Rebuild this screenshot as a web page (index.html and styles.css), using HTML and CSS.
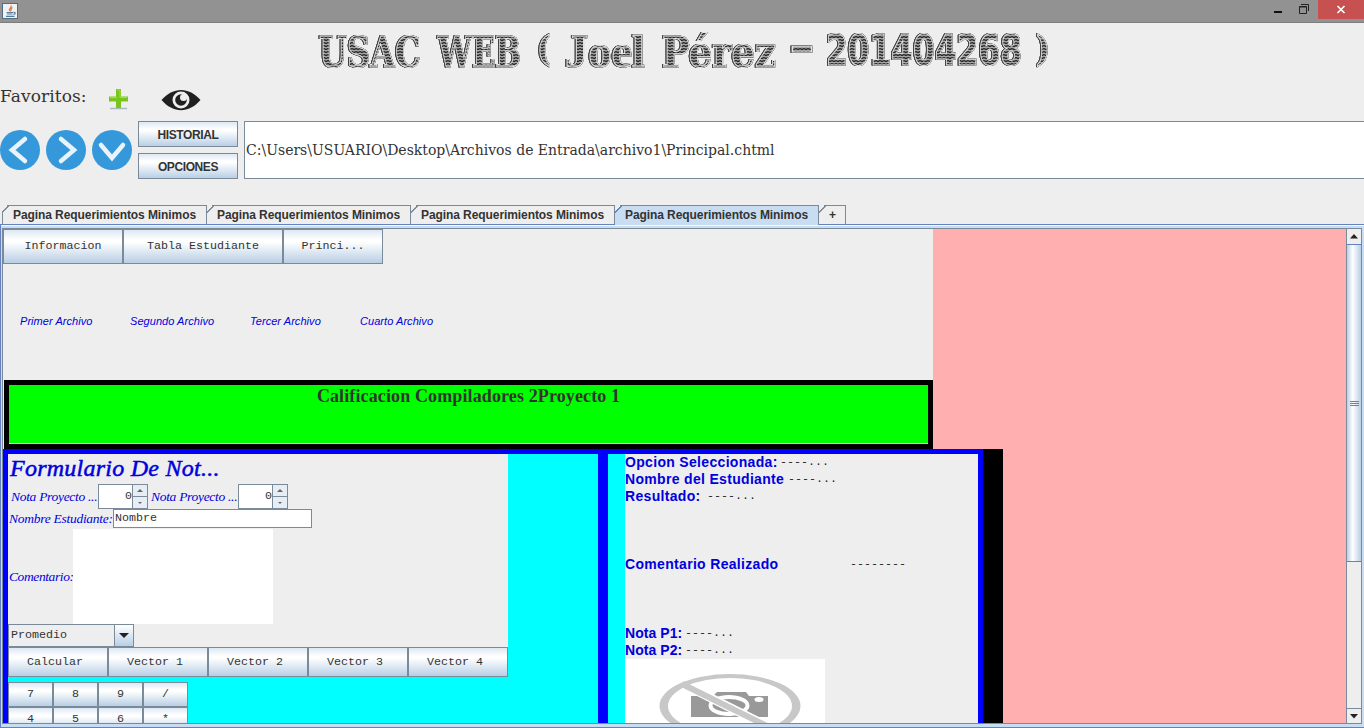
FILE: index.html
```html
<!DOCTYPE html>
<html lang="es">
<head>
<meta charset="utf-8">
<title>USAC WEB</title>
<link rel="stylesheet" href="styles.css">
</head>
<body>
<div class="window">
  <div class="titlebar">
    <svg class="java" width="17" height="17" viewBox="0 0 17 17"><rect x=".5" y=".5" width="15" height="15" fill="#eef1f5" stroke="#536d84"/><path d="M9 2.500C10 5 6.500 5.500 7.500 8M10.500 4.500C8 6 9.500 7 8.500 8.500" fill="none" stroke="#e37b38" stroke-width="1.300"/><path d="M4.500 9.500H11M5 11H10.500M4 13.300H12.500M11.500 9.300C14 9 13.500 11 11.500 11.300" fill="none" stroke="#54799b" stroke-width="1.200"/></svg>
    <div class="controls">
      <svg width="50" height="19" viewBox="0 0 50 19"><path d="M3 12H11" stroke="#111" stroke-width="2"/><path d="M28.500 6.500H35.500V13.500H28.500Z" fill="none" stroke="#222" stroke-width="1"/><path d="M28 7H36M30 4.500H37.500V11" fill="none" stroke="#222"/></svg>
      <div class="close"><svg width="10" height="9" viewBox="0 0 10 9"><path d="M1.500 1L8.500 8M8.500 1L1.500 8" stroke="#fff" stroke-width="1.700"/></svg></div>
    </div>
  </div>
  <div class="banner">
    <svg width="740" height="50" viewBox="312 23 740 50">
      <defs><pattern id="hatch" width="4" height="3" patternUnits="userSpaceOnUse"><rect width="4" height="3" fill="#aaa"/><path d="M0 .5L2 1.500L4 .5" fill="none" stroke="#222" stroke-width="1.300"/></pattern></defs>
      <g>
        <text x="319" y="67" textLength="102" lengthAdjust="spacingAndGlyphs">USAC</text><text x="438" y="67" textLength="83" lengthAdjust="spacingAndGlyphs">WEB</text><text x="537" y="61" textLength="14" lengthAdjust="spacingAndGlyphs" class="paren">(</text><text x="565" y="67" textLength="80" lengthAdjust="spacingAndGlyphs" class="name">Joel</text><text x="662" y="67" textLength="114" lengthAdjust="spacingAndGlyphs">Pérez</text><text x="789" y="61" textLength="26" lengthAdjust="spacingAndGlyphs">-</text><text x="826" y="65" textLength="196" lengthAdjust="spacingAndGlyphs" class="digits">201404268</text><text x="1036" y="61" textLength="14" lengthAdjust="spacingAndGlyphs" class="paren">)</text>
      </g>
    </svg>
  </div>
  <div class="favorites">
    <span class="favlabel">Favoritos:</span>
    <svg class="plus" width="20" height="22" viewBox="0 0 20 22"><path d="M2 19.500H19" stroke="#a9b9bd" stroke-width="1.500"/><path d="M8 0H13V7.500H20V12.500H13V19H8V12.500H1V7.500H8Z" fill="#78c51c"/><path d="M9 1H12V8.500H19M2 8.500H9" fill="none" stroke="#a0dd48"/></svg>
    <svg class="eye" width="40" height="22" viewBox="0 0 40 22"><path d="M.5 11C12-2.500 28-2.500 39.500 11C28 24.500 12 24.500 .5 11Z" fill="#202020"/><circle cx="20" cy="11" r="8.500" fill="#eee"/><circle cx="20" cy="11" r="5.800" fill="#202020"/><circle cx="22.500" cy="8.500" r="3.500" fill="#eee"/></svg>
  </div>
  <div class="nav">
    <svg width="40" height="40" viewBox="0 0 40 40"><circle cx="20" cy="20" r="20" fill="#3598db"/><path d="M25 9L12 20L25 31" class="chev"/></svg>
    <svg width="40" height="40" viewBox="0 0 40 40"><circle cx="20" cy="20" r="20" fill="#3598db"/><path d="M15 9L28 20L15 31" class="chev"/></svg>
    <svg width="40" height="40" viewBox="0 0 40 40"><circle cx="20" cy="20" r="20" fill="#3598db"/><path d="M9 15L20 28L31 15" class="chev"/></svg>
    <div class="side"><div class="btn">HISTORIAL</div><div class="btn">OPCIONES</div></div>
    <div class="address"><span>C:\Users\USUARIO\Desktop\Archivos de Entrada\archivo1\Principal.chtml</span></div>
  </div>
  <div class="tabs">
    <div class="tab"><span>Pagina Requerimientos Minimos</span></div>
    <div class="tab"><span>Pagina Requerimientos Minimos</span></div>
    <div class="tab"><span>Pagina Requerimientos Minimos</span></div>
    <div class="tab active"><span>Pagina Requerimientos Minimos</span></div>
    <div class="tab add"><span>+</span></div>
  </div>
  <div class="pane">
    <div class="view">
      <div class="page">
        <div class="menu"><div class="btn w120">Informacion</div><div class="btn w160">Tabla Estudiante</div><div class="btn w100">Princi...</div></div>
        <div class="links"><span>Primer Archivo</span><span>Segundo Archivo</span><span>Tercer Archivo</span><span>Cuarto Archivo</span></div>
        <div class="green"><span>Calificacion Compiladores 2Proyecto 1</span></div>
      </div>
      <div class="black">
        <div class="cell form">
          <div class="grey">
            <div class="formtitle"><span>Formulario De Not...</span></div>
            <div class="row spinrow">
              <span class="lbl l1">Nota Proyecto ...</span><div class="spin"><span>0</span><div class="arrows"><i class="up"></i><i class="down"></i></div></div>
              <span class="lbl l2">Nota Proyecto ...</span><div class="spin"><span>0</span><div class="arrows"><i class="up"></i><i class="down"></i></div></div>
            </div>
            <div class="row namerow"><span class="lbl l3">Nombre Estudiante:</span><div class="input">Nombre</div></div>
            <div class="row comrow"><span class="lbl l4">Comentario:</span><div class="area"></div></div>
            <div class="combo"><span>Promedio</span><div class="drop"><svg width="12" height="6" viewBox="0 0 12 6"><path d="M1 0H11L6 5Z" fill="#222"/></svg></div></div>
            <div class="actions"><div class="btn">Calcular</div><div class="btn">Vector 1</div><div class="btn">Vector 2</div><div class="btn">Vector 3</div><div class="btn">Vector 4</div></div>
          </div>
          <div class="keys"><div class="btn">7</div><div class="btn">8</div><div class="btn">9</div><div class="btn">/</div><div class="btn">4</div><div class="btn">5</div><div class="btn">6</div><div class="btn">*</div></div>
        </div>
        <div class="cell result">
          <div class="out">
            <div class="line"><b class="b1">Opcion Seleccionada:</b><span>----...</span></div>
            <div class="line"><b class="b2">Nombre del Estudiante</b><span>----...</span></div>
            <div class="line"><b class="b3">Resultado:</b><span>----...</span></div>
            <div class="line mid"><b class="b4">Comentario Realizado</b><span>--------</span></div>
            <div class="line"><b class="b5">Nota P1:</b><span>----...</span></div>
            <div class="line"><b class="b5">Nota P2:</b><span>----...</span></div>
            <svg class="noimg" width="200" height="66" viewBox="0 0 200 66"><rect width="200" height="66" fill="#fff"/><path d="M66 37V58H143V37H124L121 33H92L88 37H66Z" fill="#999"/><ellipse cx="104" cy="46.500" rx="18.500" ry="8.500" fill="none" stroke="#fff" stroke-width="4"/><ellipse cx="134" cy="40.500" rx="4.500" ry="2.500" fill="#fff"/><path d="M58 25L158 75" stroke="#fff" stroke-width="9"/><path d="M57 25L158 75" stroke="#c8c8c8" stroke-width="6"/><path fill-rule="evenodd" d="M34.500 47a70.500 32 0 1 0 141 0a70.500 32 0 1 0-141 0M43 47a62 28 0 1 0 124 0a62 28 0 1 0-124 0" fill="#c8c8c8"/></svg>
          </div>
        </div>
      </div>
    </div>
    <div class="scroll">
      <div class="sbtn"><svg width="8" height="5" viewBox="0 0 8 5"><path d="M0 4.500L4 0L8 4.500Z" fill="#222"/></svg></div>
      <div class="thumb"><i></i><i></i><i></i></div>
      <div class="track"></div>
      <div class="sbtn bottom"><svg width="8" height="5" viewBox="0 0 8 5"><path d="M0 0L4 4.500L8 0Z" fill="#222"/></svg></div>
    </div>
  </div>
</div>
</body>
</html>
```
FILE: styles.css
```css
* { box-sizing: border-box; }
body { margin: 0; overflow: hidden; }
.window { width: 1364px; height: 728px; background: #eee; display: flex; flex-direction: column; overflow: hidden; color: #333; font-family: "Liberation Sans", Arial, sans-serif; }
.window span, .window b { white-space: nowrap; }
svg { display: block; flex: none; }
.titlebar { height: 23px; background: #929292; border-bottom: 1px solid #7d7d7d; display: flex; justify-content: space-between; padding: 3px 0 0 2px; flex: none; }
.controls { display: flex; margin-top: -3px; }
.controls > svg { margin-right: -6px; }
.close { width: 46px; height: 19px; background: #c75050; display: flex; align-items: center; justify-content: center; margin-left: 3px; }
.banner { height: 50px; padding-left: 312px; flex: none; }
.banner svg { overflow: visible; }
.banner g { filter: drop-shadow(.8px 0 0 #444) drop-shadow(-.8px 0 0 #444) drop-shadow(0 .5px 0 #444); }
.banner text { font: bold 43px "DejaVu Serif", serif; fill: url(#hatch); stroke: #e4e4e4; stroke-width: 1; }
.banner .paren { font-size: 35px; }
.banner .name { font: bold 47px "Liberation Serif", serif; }
.banner .digits { font-family: "DejaVu Sans Condensed", "DejaVu Sans", sans-serif; }
.favorites { height: 48px; display: flex; align-items: flex-start; padding-top: 14px; flex: none; }
.favlabel { font: 17px/19px "DejaVu Serif", serif; letter-spacing: .1px; width: 108px; }
.plus { margin-top: 2px; margin-right: 33px; }
.eye { margin-top: 2px; }
.nav { height: 58px; display: flex; align-items: center; gap: 6px; flex: none; }
.nav .side { display: flex; flex-direction: column; gap: 6px; width: 100px; }
.btn { border: 1px solid #7a8a99; background: linear-gradient(#dde8f3 0, #fff 30%, #fff 36%, #b8cfe5 100%); display: flex; align-items: center; justify-content: center; }
.nav .btn { height: 26px; font: bold 12px "Liberation Sans", sans-serif; letter-spacing: -.4px; padding-top: 1px; }
.chev { fill: none; stroke: #e8f3fb; stroke-width: 4.5; stroke-linecap: round; stroke-linejoin: miter; }
.address { flex: 1; height: 58px; border: 1px solid #7a8a99; border-right: 0; background: #fff; display: flex; align-items: center; padding-left: 1px; font: 14px "DejaVu Serif", serif; }
.tabs { height: 45px; display: flex; align-items: flex-end; padding-left: 2px; flex: none; }
.tab { width: 204px; height: 19px; padding-left: 10px; font: bold 12px/19px "Liberation Sans", sans-serif; letter-spacing: -.08px; background: linear-gradient(135deg, #eee 4px, #7a8a99 4px, #7a8a99 5px, transparent 5px); border-style: solid; border-image: linear-gradient(90deg, #eee 6px, #7a8a99 6px) 1; border-width: 1px 1px 0 0; }
.tab:first-child { width: 205px; padding-left: 11px; background: linear-gradient(135deg, #eee 4px, #7a8a99 4px, #7a8a99 5px, transparent 5px), linear-gradient(#7a8a99, #7a8a99) 0 6px / 1px 20px no-repeat; }
.tab.active { background: linear-gradient(135deg, #eee 4px, #6382bf 4px, #6382bf 5px, #c8ddf2 5px); height: 20px; margin-bottom: -1px; z-index: 1; }
.tab.add { width: 27px; }
.pane { flex: 1; border: 1px solid #6382bf; border-right: 0; padding: 3px 1px; display: flex; background: #c8ddf2; box-shadow: inset 0 1px #f4f8fc; min-height: 0; }
.view { width: 1344px; border: 1px solid #7a8a99; border-right: 0; background: #ffafaf; overflow: hidden; }
.page { width: 930px; height: 220px; background: #eee; }
.menu { display: flex; height: 35px; }
.menu .btn, .actions .btn, .keys .btn { font: 11.67px "Liberation Mono", monospace; }
.menu .btn { padding-bottom: 1px; }
.w120 { width: 120px; }
.w160 { width: 160px; }
.w100 { width: 100px; }
.links { height: 116px; padding: 50px 0 0 17px; display: flex; color: #00d; font: italic 11px/14px "Liberation Sans", sans-serif; letter-spacing: .05px; }
.links span { width: 110px; }
.links span:nth-child(2) { width: 120px; }
.green { margin-left: 1px; height: 69px; border: 5px solid #000; background: #0f0; box-shadow: inset 0 -1px #cfc; text-align: center; font: bold 18px/23px "Liberation Serif", serif; letter-spacing: .12px; }
.black { width: 1000px; height: 300px; background: #000; display: flex; }
.cell { background: #0ff; border: 5px solid #00f; height: 300px; }
.form { width: 600px; }
.result { width: 380px; padding-left: 17px; }
.grey { width: 500px; background: #eee; }
.formtitle { height: 30px; color: #00d; font: italic 24px/29px "Liberation Serif", serif; letter-spacing: .25px; -webkit-text-stroke: .5px #00d; padding-left: 2px; }
.row { display: flex; align-items: center; }
.lbl { color: #00d; font: italic 13.5px "Liberation Serif", serif; letter-spacing: -.3px; }
.spinrow { height: 25px; }
.l1, .l2 { width: 90px; padding-left: 3px; }
.spin { width: 50px; height: 25px; border: 1px solid #7a8a99; background: #fff; display: flex; }
.spin span { width: 33px; text-align: right; font: 11.67px/23px "Liberation Mono", monospace; }
.arrows { flex: 1; display: flex; flex-direction: column; border-left: 1px solid #7a8a99; }
.arrows i { flex: 1; background: #e6edf5; display: flex; align-items: center; justify-content: center; }
.arrows i::after { content: ""; border: 3px solid transparent; border-top: 0; border-bottom: 3px solid #666; }
.arrows .down { border-top: 1px solid #7a8a99; }
.arrows .down::after { border-width: 2px; border-top: 2px solid #666; border-bottom: 0; }
.namerow { height: 20px; align-items: flex-start; }
.l3 { width: 105px; padding: 2px 0 0 1px; }
.lbl.l3 { letter-spacing: -.27px; }
.lbl.l4 { letter-spacing: -.4px; }
.input { width: 199px; height: 19px; border: 1px solid #7a8a99; background: #fff; font: 11.67px/17px "Liberation Mono", monospace; padding-left: 1px; }
.comrow { height: 95px; }
.l4 { width: 65px; padding-left: 1px; }
.area { width: 200px; height: 95px; background: #fff; }
.combo { width: 126px; height: 23px; border: 1px solid #7a8a99; display: flex; font: 11.67px/20px "Liberation Mono", monospace; padding-left: 2px; justify-content: space-between; }
.drop { width: 19px; border-left: 1px solid #7a8a99; background: linear-gradient(#fff, #b8cfe5); display: flex; align-items: center; justify-content: center; }
.actions { display: flex; height: 30px; }
.actions .btn { width: 100px; padding: 0 6px 1px 0; }
.keys { margin-top: 5px; display: grid; grid-template-columns: repeat(4, 45px); grid-auto-rows: 25px; }
.keys .btn { padding-bottom: 1px; }
.out { width: 353px; height: 290px; background: #eee; }
.line { height: 17px; display: flex; align-items: center; color: #00d; font: bold 14px/17px "Liberation Sans", sans-serif; letter-spacing: .32px; }
.line span { font: 11.67px/17px "Liberation Mono", monospace; letter-spacing: 0; color: #222; }
.b1 { width: 155px; }
.b2 { width: 163px; }
.b3 { width: 82px; }
.b4 { width: 225px; }
.line .b5 { width: 60px; letter-spacing: .05px; }
.mid { margin: 51px 0 52px; }
.scroll { width: 16px; display: flex; flex-direction: column; border: 1px solid #7a8a99; background: #eee; }
.sbtn { height: 15px; display: flex; align-items: center; justify-content: center; }
.thumb { height: 318px; border: 1px solid #6382bf; border-width: 1px 0; background: linear-gradient(90deg, #b8cfe5, #fff 40%, #b8cfe5); display: flex; flex-direction: column; align-items: center; justify-content: center; gap: 1px; }
.thumb i { width: 9px; height: 1px; background: #6382bf; }
.track { flex: 1; }
.bottom { border-top: 1px solid #7a8a99; }
```
